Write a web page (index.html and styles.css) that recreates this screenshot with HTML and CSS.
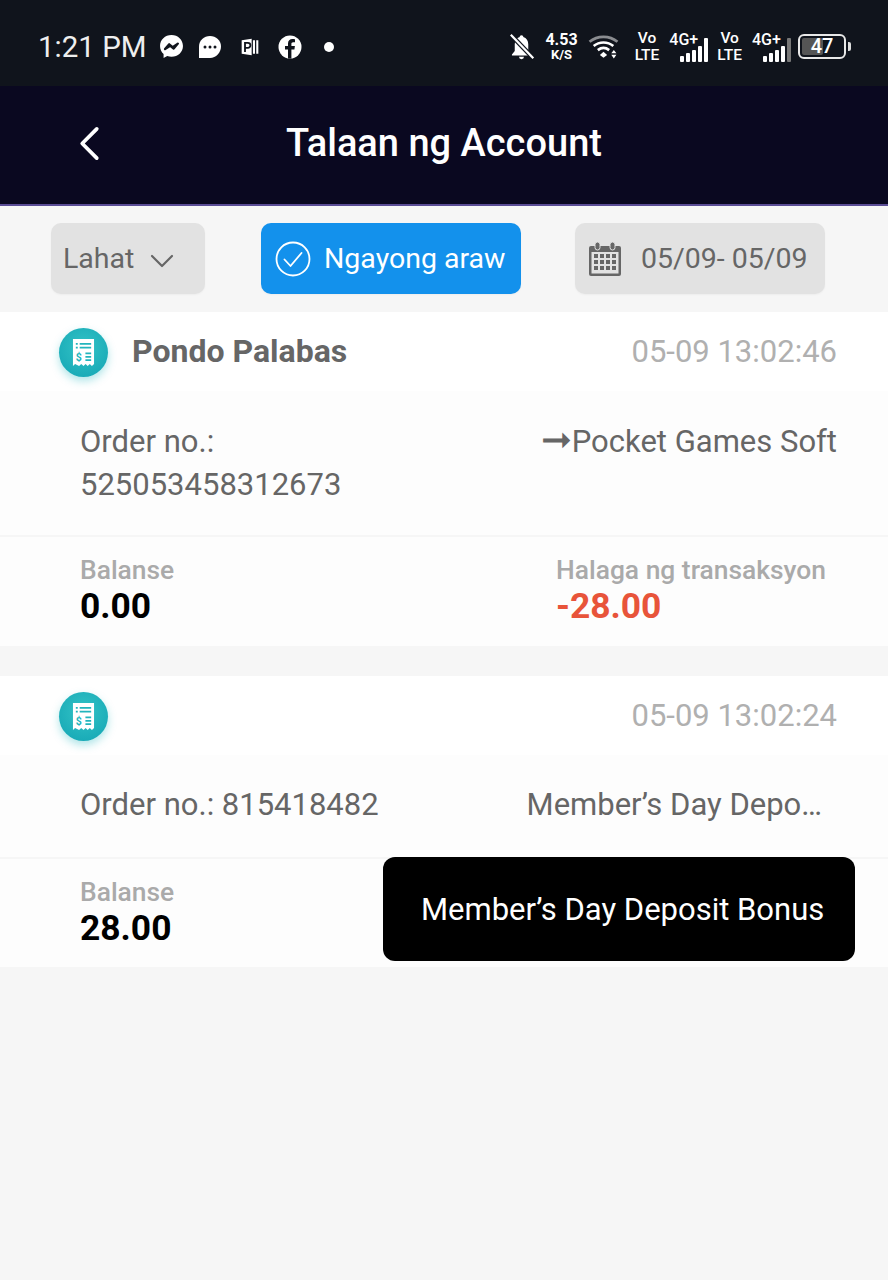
FILE: index.html
```html
<!DOCTYPE html>
<html lang="fil">
<head>
  <meta charset="UTF-8">
  <meta name="viewport" content="width=device-width, initial-scale=1.0">
  <title>Talaan ng Account</title>
  <link rel="stylesheet" href="styles.css">
</head>
<body>

  <!-- status bar -->
  <div class="statusbar">
    <div class="status-left">
      <span class="clock">1:21 PM</span>
      <svg class="ico messenger" viewBox="0 0 24 24"><path fill="#fff" d="M12 1C5.800 1 1 5.500 1 11.500c0 3.100 1.300 5.800 3.400 7.700V23l3.500-1.900c1.300.5 2.700.7 4.100.7 6.200 0 11-4.500 11-10.300S18.200 1 12 1z"/><path fill="none" stroke="#10141c" stroke-width="2.200" stroke-linejoin="round" d="M5.800 14.500l4-4.600 3.300 2.700 5-3.400-4 4.700-3.300-2.600z"/></svg>
      <svg class="ico chat" viewBox="0 0 24 24"><path fill="#fff" d="M12 1c6 0 11 4.500 11 10.500S18 23 12 23H1V11.500C1 5.500 6 1 12 1z"/><circle cx="7" cy="12" r="1.500" fill="#10141c"/><circle cx="12" cy="12" r="1.500" fill="#10141c"/><circle cx="17" cy="12" r="1.500" fill="#10141c"/></svg>
      <svg class="ico parking" viewBox="0 0 24 24"><path fill="#fff" d="M2 4l12-2v20L2 20z"/><path fill="none" stroke="#10141c" stroke-width="2.200" d="M6 18V7h3.500a2.800 2.800 0 010 6H6"/><path fill="#fff" d="M15.500 4H18v16h-2.500zM19.500 4H22v16h-2.500z"/></svg>
      <svg class="ico facebook" viewBox="0 0 24 24"><circle cx="12" cy="12" r="11.500" fill="#fff"/><path fill="#10141c" d="M13.400 23.500V14.600h3l.5-3.500h-3.500V9c0-1 .4-1.700 1.800-1.700H17V4.200c-.4 0-1.400-.2-2.600-.2-2.600 0-4.400 1.600-4.400 4.500v2.600H7v3.500h3v8.900z"/></svg>
      <span class="dot"></span>
    </div>
    <div class="status-right">
      <svg class="ico bell" viewBox="0 0 24 24"><path fill="#fff" d="M12 2c-1 0-1.600.7-1.600 1.500C7.500 4.300 6 6.800 6 10v6l-2.500 3v1h17v-1L18 16v-6c0-3.200-1.500-5.700-4.400-6.500C13.600 2.700 13 2 12 2z"/><path fill="#fff" d="M9.800 21.200h4.400a2.200 2.200 0 01-4.400 0z"/><path stroke="#10141c" stroke-width="4" d="M2 1l21 22"/><path stroke="#fff" stroke-width="2" d="M2.500 1.500l20 21"/></svg>
      <div class="speed"><b>4.53</b><b class="unit">K/S</b></div>
      <svg class="ico wifi" viewBox="0 0 30 24"><path fill="none" stroke="#8a8c90" stroke-width="2.600" d="M1.500 7.500c7.500-6.500 19.500-6.500 27 0"/><path fill="none" stroke="#fff" stroke-width="2.600" d="M5.500 11.500c5.500-4.500 13.500-4.500 19 0M9.500 15.500c3.300-2.500 7.700-2.500 11 0"/><path fill="#fff" d="M15 17l3.500 3.200L15 23l-3.500-2.800z"/><path fill="#fff" d="M25 15.500l2.500 3h-5zM25 23.500l2.500-3.500h-5z"/></svg>
      <div class="volte"><b>Vo</b><b>LTE</b></div>
      <div class="signal">
        <b class="net">4G+</b>
        <div class="bars">
          <i class="b1"></i><i class="b2"></i><i class="b3"></i><i class="b4"></i><i class="b5"></i>
        </div>
      </div>
      <div class="volte"><b>Vo</b><b>LTE</b></div>
      <div class="signal">
        <b class="net">4G+</b>
        <div class="bars">
          <i class="b1"></i><i class="b2"></i><i class="b3"></i><i class="b4"></i><i class="b5 off"></i>
        </div>
      </div>
      <div class="battery">
        <div class="battery-body"><span class="battery-fill"></span><b>47</b></div>
        <span class="battery-tip"></span>
      </div>
    </div>
  </div>

  <!-- header -->
  <div class="topbar">
    <svg class="back" viewBox="0 0 24 36"><path fill="none" stroke="#fff" stroke-width="3.800" stroke-linecap="round" stroke-linejoin="round" d="M20 3L5 18l15 15"/></svg>
    <h1>Talaan ng Account</h1>
  </div>

  <!-- filters -->
  <div class="filters">
    <div class="pill pill-type">
      <span>Lahat</span>
      <svg class="chevron" viewBox="0 0 24 14"><path fill="none" stroke="#666" stroke-width="2.200" stroke-linecap="round" stroke-linejoin="round" d="M2 2l10 10L22 2"/></svg>
    </div>
    <div class="pill pill-today">
      <svg class="check" viewBox="0 0 36 36"><circle cx="18" cy="18" r="16.500" fill="none" stroke="#fff" stroke-width="1.800"/><path fill="none" stroke="#fff" stroke-width="1.800" stroke-linecap="round" stroke-linejoin="round" d="M9.500 18.500l6 6.500 11-13"/></svg>
      <span>Ngayong araw</span>
    </div>
    <div class="pill pill-date">
      <svg class="calendar" viewBox="0 0 32 34">
        <path fill="#666" d="M2 4h28a2 2 0 012 2v26a2 2 0 01-2 2H2a2 2 0 01-2-2V6a2 2 0 012-2z"/>
        <rect x="2.500" y="10" width="27" height="21.500" fill="#e2e2e2"/>
        <rect x="6" y="0" width="5" height="8" rx="2.500" fill="#666" stroke="#e2e2e2"/>
        <rect x="21" y="0" width="5" height="8" rx="2.500" fill="#666" stroke="#e2e2e2"/>
        <g fill="#666">
          <rect x="5" y="12" width="4" height="4"/><rect x="11" y="12" width="4" height="4"/><rect x="17" y="12" width="4" height="4"/><rect x="23" y="12" width="4" height="4"/>
          <rect x="5" y="18" width="4" height="4"/><rect x="11" y="18" width="4" height="4"/><rect x="17" y="18" width="4" height="4"/><rect x="23" y="18" width="4" height="4"/>
          <rect x="5" y="24" width="4" height="4"/><rect x="11" y="24" width="4" height="4"/><rect x="17" y="24" width="4" height="4"/><rect x="23" y="24" width="4" height="4"/>
        </g>
      </svg>
      <span>05/09- 05/09</span>
    </div>
  </div>

  <!-- records -->
  <div class="record">
    <div class="record-head">
      <div class="coin">
        <svg viewBox="0 0 24 30"><path fill="#fff" d="M1 1h22v26l-2.200 2-2.200-2-2.200 2-2.200-2-2.200 2-2.400-2-2.200 2L3.200 27 1 29z"/><path stroke="#22b5bd" stroke-width="1.800" d="M4 6h2M8 6h12M4 10h2M8 10h12M14 16h6M14 19.500h6M14 23h6"/><text x="4" y="24" font-size="11" font-family="Roboto" font-weight="700" fill="#22b5bd">$</text></svg>
      </div>
      <strong class="kind">Pondo Palabas</strong>
      <span class="time">05-09 13:02:46</span>
    </div>
    <div class="record-info info-tall">
      <div class="order">Order no.:<br>525053458312673</div>
      <div class="note"><span class="arrow">➞</span>Pocket Games Soft</div>
    </div>
    <div class="record-foot">
      <div class="col">
        <span class="lbl">Balanse</span>
        <b class="val">0.00</b>
      </div>
      <div class="col col-amount">
        <span class="lbl">Halaga ng transaksyon</span>
        <b class="val minus">-28.00</b>
      </div>
    </div>
  </div>

  <div class="record record-second">
    <div class="record-head">
      <div class="coin">
        <svg viewBox="0 0 24 30"><path fill="#fff" d="M1 1h22v26l-2.200 2-2.200-2-2.200 2-2.200-2-2.200 2-2.400-2-2.200 2L3.200 27 1 29z"/><path stroke="#22b5bd" stroke-width="1.800" d="M4 6h2M8 6h12M4 10h2M8 10h12M14 16h6M14 19.500h6M14 23h6"/><text x="4" y="24" font-size="11" font-family="Roboto" font-weight="700" fill="#22b5bd">$</text></svg>
      </div>
      <span class="time">05-09 13:02:24</span>
    </div>
    <div class="record-info info-short">
      <div class="order">Order no.: 815418482</div>
      <div class="note note-cut">Member’s Day Depo…</div>
    </div>
    <div class="record-foot foot-last">
      <div class="col">
        <span class="lbl">Balanse</span>
        <b class="val">28.00</b>
      </div>
    </div>
    <div class="tooltip">Member’s Day Deposit Bonus</div>
  </div>

</body>
</html>
```

FILE: styles.css
```css
* {
  box-sizing: border-box;
}
body {
  margin: 0;
  background-color: #f6f6f6;
  font-family: Roboto, "Liberation Sans", sans-serif;
  min-height: 1280px;
}
.ico {
  display: block;
  flex: none;
}

/* status bar */
.statusbar {
  height: 86px;
  background-color: #10141c;
  color: #fff;
  display: flex;
  justify-content: space-between;
  align-items: center;
  padding: 7px 38px 0 38px;
}
.status-left {
  display: flex;
  align-items: center;
}
.clock {
  font-size: 29.5px;
  width: 121px;
  color: #eee;
  white-space: nowrap;
}
.messenger { width: 25px; height: 25px; }
.chat { width: 24px; height: 24px; margin-left: 14px; }
.parking { width: 20px; height: 20px; margin-left: 18px; }
.facebook { width: 24px; height: 24px; margin-left: 18px; }
.dot {
  width: 10px;
  height: 10px;
  border-radius: 50%;
  background-color: #fff;
  margin-left: 22px;
}
.status-right {
  display: flex;
  align-items: center;
  margin-right: -1px;
}
.bell { width: 27px; height: 29px; }
.speed {
  display: flex;
  flex-direction: column;
  align-items: center;
  margin-left: 10px;
  font-size: 16px;
  line-height: 16px;
}
.speed .unit { font-size: 13px; line-height: 14px; }
.wifi { width: 31px; height: 25px; margin-left: 10px; }
.volte {
  display: flex;
  flex-direction: column;
  align-items: center;
  margin-left: 16px;
  font-size: 15.5px;
  font-weight: 500;
  line-height: 16.5px;
}
.volte b { font-weight: 500; }
.signal + .volte { margin-left: 9px; }
.signal {
  position: relative;
  width: 39px;
  height: 30px;
  margin-left: 10px;
}
.net {
  position: absolute;
  top: 0;
  left: 0;
  font-size: 16px;
  line-height: 15px;
  font-weight: 500;
}
.bars {
  position: absolute;
  right: 0;
  bottom: 0;
  display: flex;
  align-items: flex-end;
  gap: 2px;
}
.bars i {
  display: block;
  width: 4px;
  background-color: #fff;
  border-radius: 1px;
}
.bars .b1 { height: 6px; }
.bars .b2 { height: 9px; }
.bars .b3 { height: 12px; }
.bars .b4 { height: 16px; }
.bars .b5 { height: 24px; }
.bars .off { background-color: #777; }
.battery {
  display: flex;
  align-items: center;
  margin-left: 7px;
}
.battery-body {
  position: relative;
  width: 48px;
  height: 25px;
  border: 2px solid #e8e8e8;
  border-radius: 6px;
  text-align: center;
  font-size: 20px;
  line-height: 21px;
  padding: 0;
}
.battery-body b {
  position: relative;
  font-weight: 500;
}
.battery-fill {
  position: absolute;
  left: 2px;
  top: 2px;
  bottom: 2px;
  width: 21px;
  background-color: #555;
  border-radius: 2px;
}
.battery-tip {
  width: 3px;
  height: 9px;
  margin-left: 2px;
  background-color: #ddd;
  border-radius: 0 2px 2px 0;
}

/* header */
.topbar {
  position: relative;
  height: 120px;
  padding-bottom: 4px;
  background-color: #0a0820;
  border-bottom: 2px solid #5b4d96;
  display: flex;
  align-items: center;
  justify-content: center;
}
.topbar h1 {
  margin: 0;
  color: #fff;
  font-size: 38px;
  font-weight: 500;
}
.back {
  position: absolute;
  left: 77px;
  top: 40px;
  width: 24px;
  height: 35px;
}

/* filters */
.filters {
  height: 106px;
  padding: 17px 0 18px 51px;
  display: flex;
}
.pill {
  display: flex;
  align-items: center;
  border-radius: 10px;
  background-color: #e2e2e2;
  box-shadow: 0 1px 2px rgba(0, 0, 0, 0.04);
  color: #666;
  font-size: 28.5px;
}
.pill-type {
  width: 154px;
  padding-left: 12px;
}
.chevron {
  width: 24px;
  height: 14px;
  margin-left: 16px;
  margin-top: 4px;
}
.pill-today {
  width: 260px;
  margin-left: 56px;
  padding-left: 14px;
  background-color: #1391ec;
  color: #fff;
}
.check {
  width: 36px;
  height: 36px;
  margin-right: 13px;
}
.pill-date {
  width: 250px;
  margin-left: 54px;
  padding-left: 14px;
}
.calendar {
  width: 32px;
  height: 36px;
  margin-right: 20px;
}

/* records */
.record {
  position: relative;
  background-color: #fff;
}
.record-second {
  margin-top: 30px;
}
.record-head {
  height: 79px;
  padding: 0 51px 0 59px;
  display: flex;
  align-items: center;
}
.coin {
  width: 49px;
  height: 49px;
  margin-top: 1px;
  border-radius: 50%;
  background: radial-gradient(circle at 50% 40%, #33c3c6, #12a4b3);
  box-shadow: 0 4px 8px rgba(30, 180, 190, 0.35);
  display: flex;
  align-items: center;
  justify-content: center;
}
.coin svg {
  width: 23px;
  height: 29px;
}
.kind {
  margin-left: 24px;
  margin-bottom: 2px;
  font-size: 32px;
  font-weight: 700;
  color: #666;
}
.time {
  margin-left: auto;
  font-size: 31px;
  color: #b0b0b0;
}
.record-info {
  padding: 0 51px 0 80px;
  display: flex;
  justify-content: space-between;
  font-size: 31px;
  line-height: 43px;
  color: #666;
  background-color: #fdfdfd;
}
.info-tall {
  height: 144px;
  padding-top: 29px;
}
.info-short {
  height: 102px;
  padding-top: 28px;
  padding-right: 66px;
}
.arrow {
  font-size: 37px;
  line-height: 30px;
}
.note-cut {
  white-space: nowrap;
}
.record-foot {
  height: 111px;
  padding: 17px 63px 0 80px;
  border-top: 2px solid #f6f6f6;
  background-color: #fdfdfd;
  display: flex;
  justify-content: space-between;
}
.foot-last {
  height: 110px;
}
.col {
  display: flex;
  flex-direction: column;
}
.col-amount {
  width: 269px;
}
.lbl {
  font-size: 26.4px;
  font-weight: 500;
  line-height: 32px;
  color: #aaa;
  white-space: nowrap;
}
.val {
  font-size: 35.4px;
  font-weight: 700;
  line-height: 40px;
  color: #000;
}
.minus {
  color: #e8543a;
}
.tooltip {
  position: absolute;
  left: 383px;
  top: 181px;
  width: 472px;
  height: 104px;
  padding-left: 38px;
  border-radius: 12px;
  background-color: #000;
  color: #fff;
  font-size: 31px;
  display: flex;
  align-items: center;
}
```
